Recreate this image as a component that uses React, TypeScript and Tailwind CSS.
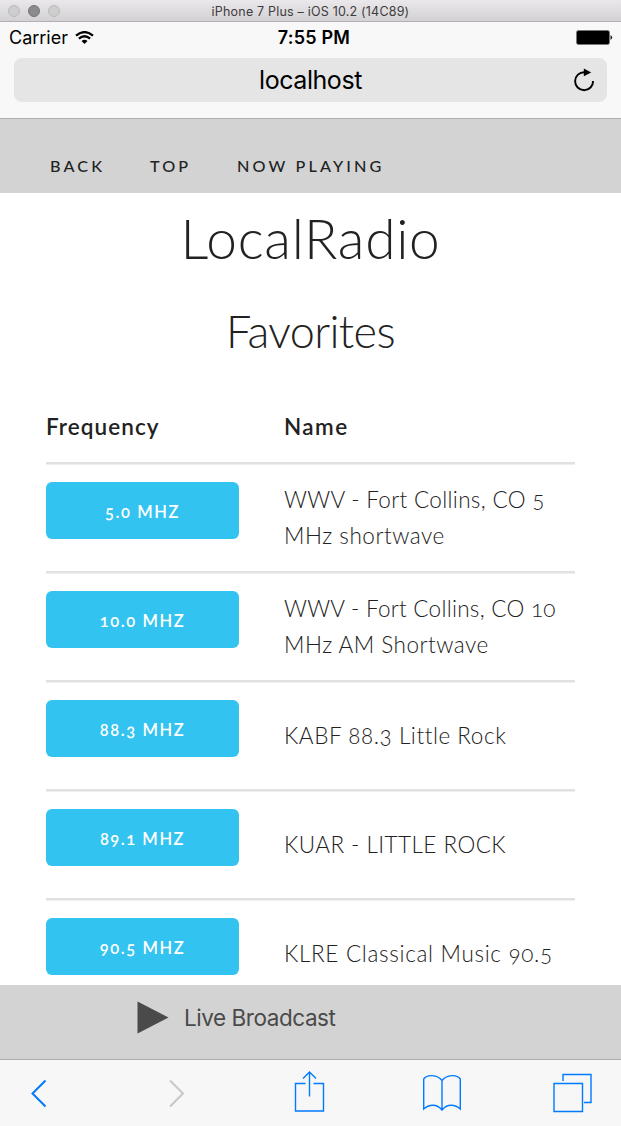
import React from "react";

type Station = { freq: string; freqClass: string; lines: { text: string; cls: string }[] };

const stations: Station[] = [
  {
    freq: "5.0 MHz",
    freqClass: "tracking-[1.6px]",
    lines: [
      { text: "WWV - Fort Collins, CO 5", cls: "tracking-[0.33px]" },
      { text: "MHz shortwave", cls: "tracking-[0.53px]" },
    ],
  },
  {
    freq: "10.0 MHz",
    freqClass: "tracking-[1.6px]",
    lines: [
      { text: "WWV - Fort Collins, CO 10", cls: "tracking-[0.27px]" },
      { text: "MHz AM Shortwave", cls: "tracking-[0.5px]" },
    ],
  },
  {
    freq: "88.3 MHz",
    freqClass: "tracking-[1.6px]",
    lines: [{ text: "KABF 88.3 Little Rock", cls: "tracking-[0.55px]" }],
  },
  {
    freq: "89.1 MHz",
    freqClass: "tracking-[1.55px]",
    lines: [{ text: "KUAR - LITTLE ROCK", cls: "tracking-[0.45px]" }],
  },
  {
    freq: "90.5 MHz",
    freqClass: "tracking-[1.6px]",
    lines: [{ text: "KLRE Classical Music 90.5", cls: "tracking-[0.68px]" }],
  },
];

function WindowBar() {
  return (
    <div className="relative flex h-[22px] shrink-0 items-center justify-center border-b border-[#b1b0b2] bg-linear-to-b from-[#eae8ea] to-[#d3d1d3]">
      <div className="absolute left-[8px] top-[5px] flex gap-[8px]">
        <span className="size-[12px] rounded-full border border-[#b9b8ba] bg-[#cfcecf]" />
        <span className="size-[12px] rounded-full border border-[#747377] bg-[#8b8a8e]" />
        <span className="size-[12px] rounded-full border border-[#b9b8ba] bg-[#cfcecf]" />
      </div>
      <span className="pt-px text-[12.500px] leading-[21px] tracking-[0.2px] text-[#3d3c3e]">
        iPhone 7 Plus – iOS 10.2 (14C89)
      </span>
    </div>
  );
}

function StatusBar() {
  return (
    <div className="flex h-[32px] items-center pl-[9px] pr-[8px] text-black">
      <div className="flex flex-1 items-center gap-[7px]">
        <span className="text-[18px] leading-[32px]">Carrier</span>
        <svg className="-mt-px" width="19" height="14" viewBox="0 0 19 14" fill="none" stroke="#000" strokeWidth="2.2">
          <path d="M1 4.600Q9.500-2.500 18 4.600" />
          <path d="M3.900 7.700Q9.500 2.800 15.100 7.700" />
          <path d="M9.500 13L6.500 10Q9.500 7.600 12.500 10Z" fill="#000" stroke="none" />
        </svg>
      </div>
      <span className="pl-[6px] text-[18px] font-semibold leading-[32px] tracking-[0.2px]">7:55 PM</span>
      <div className="flex flex-1 justify-end">
        <svg className="-mt-[2px]" width="37" height="15" viewBox="0 0 37 15">
          <rect x=".5" y=".5" width="33" height="14" rx="2" fill="#000" stroke="#777" />
          <path d="M34.500 5Q38 7.500 34.500 10Z" fill="#222" />
        </svg>
      </div>
    </div>
  );
}

function AddressBar() {
  return (
    <div className="px-[14px] pt-[4px]">
      <div className="relative flex h-[44px] items-center justify-center rounded-[8px] bg-[#e5e5e5]">
        <span className="text-[25px] leading-[44px] tracking-[-0.45px] text-black">localhost</span>
        <svg className="absolute right-[12px] top-[9px]" width="22" height="25" viewBox="0 0 22 25">
          <path d="M11.500 5.200A9 9 0 1 0 20.100 14" fill="none" stroke="#000" strokeWidth="1.900" />
          <path d="M10.800 1.500L18.200 5.600L10.800 9.300Z" fill="#000" />
        </svg>
      </div>
    </div>
  );
}

function NavLinks() {
  return (
    <nav className="flex h-[74px] shrink-0 items-end bg-[#d3d3d3] pb-[15px] pl-[50px] font-['Lato'] text-[16.200px] font-medium leading-[24px] text-[#222]">
      <span className="w-[100px] tracking-[3.1px]">BACK</span>
      <span className="w-[87px] tracking-[3.1px]">TOP</span>
      <span className="tracking-[3.150px]">NOW PLAYING</span>
    </nav>
  );
}

function Favorites() {
  return (
    <main className="flex h-[792px] shrink-0 flex-col overflow-hidden bg-white font-['Lato'] text-[#222]">
      <h1 className="mt-[13px] text-center text-[55px] font-light leading-[64px] tracking-[0.7px]">LocalRadio</h1>
      <h2 className="mt-[33px] text-center text-[45px] font-light leading-[56px] tracking-[-0.6px]">Favorites</h2>
      <div className="ml-[46px] mr-[46px] mt-[39px]">
        <div className="flex h-[66px] border-b-[2px] border-[#e1e1e1] pt-[11px] text-[22.500px] font-semibold leading-[36px] shadow-[0_1px_0_#efefef]">
          <span className="w-[238px] tracking-[1.050px]">Frequency</span>
          <span className="tracking-[1.4px]">Name</span>
        </div>
        {stations.map((s) => (
          <div key={s.freq} className="flex h-[109px] border-b-[2px] border-[#e1e1e1] shadow-[0_1px_0_#efefef]">
            <div className="w-[238px] pt-[18px]">
              <button className="flex h-[57px] w-[193px] items-center justify-center rounded-[6px] bg-[#33c3f0] pt-[4px] text-[16.500px] font-semibold uppercase text-white [font-variant-numeric:oldstyle-nums]">
                <span className={s.freqClass}>{s.freq}</span>
              </button>
            </div>
            <div className="flex flex-col justify-center whitespace-nowrap text-[22.500px] leading-[36px] font-light [font-variant-numeric:oldstyle-nums]">
              {s.lines.map((l) => (
                <span key={l.text} className={l.cls}>
                  {l.text}
                </span>
              ))}
            </div>
          </div>
        ))}
      </div>
    </main>
  );
}

function Player() {
  return (
    <div className="flex h-[74px] shrink-0 items-start bg-[#d3d3d3] pl-[137px] pt-[15px] text-[#4a4a4a]">
      <svg width="32" height="34" viewBox="0 0 32 34">
        <path d="M.500 1.500L31.500 17.500L.500 33.500Z" fill="#4a4a4a" />
      </svg>
      <span className="ml-[15px] text-[22.500px] leading-[36px] tracking-[-0.450px]">Live Broadcast</span>
    </div>
  );
}

function Toolbar() {
  return (
    <div className="flex h-[67px] shrink-0 items-start border-t border-[#acacae] bg-[#f7f7f7] pl-[31px] pt-[11px]">
      <svg width="16" height="44" viewBox="0 0 16 44" fill="none" stroke="#007aff" strokeWidth="2">
        <path d="M14.500 9.500L1.500 22.500L14.500 35.500" />
      </svg>
      <svg className="ml-[122px]" width="16" height="44" viewBox="0 0 16 44" fill="none" stroke="#c7c7c7" strokeWidth="2">
        <path d="M1 9.500L14 22.500L1 35.500" />
      </svg>
      <svg className="ml-[109px]" width="31" height="44" viewBox="0 0 31 44" fill="none" stroke="#007aff" strokeWidth="1.4">
        <path d="M11.500 12.500H1.500V40H29.500V12.500H19.500M15.500 25.500V1.500M9 7.500L15.500 1L22 7.500" />
      </svg>
      <svg className="ml-[97px]" width="40" height="44" viewBox="0 0 40 44" fill="none" stroke="#007aff" strokeWidth="1.400">
        <path d="M20 9.500C15 3.300 5 3.300 1.700 8V38C7 33 15 32.500 20 39C25 32.500 33 33 38.300 38V8C35 3.300 25 3.300 20 9.500V39" />
      </svg>
      <svg className="ml-[91px]" width="39" height="44" viewBox="0 0 39 44" fill="none" stroke="#007aff" strokeWidth="1.400">
        <path d="M1 12.500H29.500V40.500H1ZM10 10V3.500H38V31.500H31" />
      </svg>
    </div>
  );
}

export default function App() {
  return (
    <div className="flex h-[1126px] w-[621px] flex-col overflow-hidden bg-white font-['Inter']">
      <WindowBar />
      <header className="h-[97px] shrink-0 border-b border-[#acacae] bg-[#f8f8f8]">
        <StatusBar />
        <AddressBar />
      </header>
      <NavLinks />
      <Favorites />
      <Player />
      <Toolbar />
    </div>
  );
}
